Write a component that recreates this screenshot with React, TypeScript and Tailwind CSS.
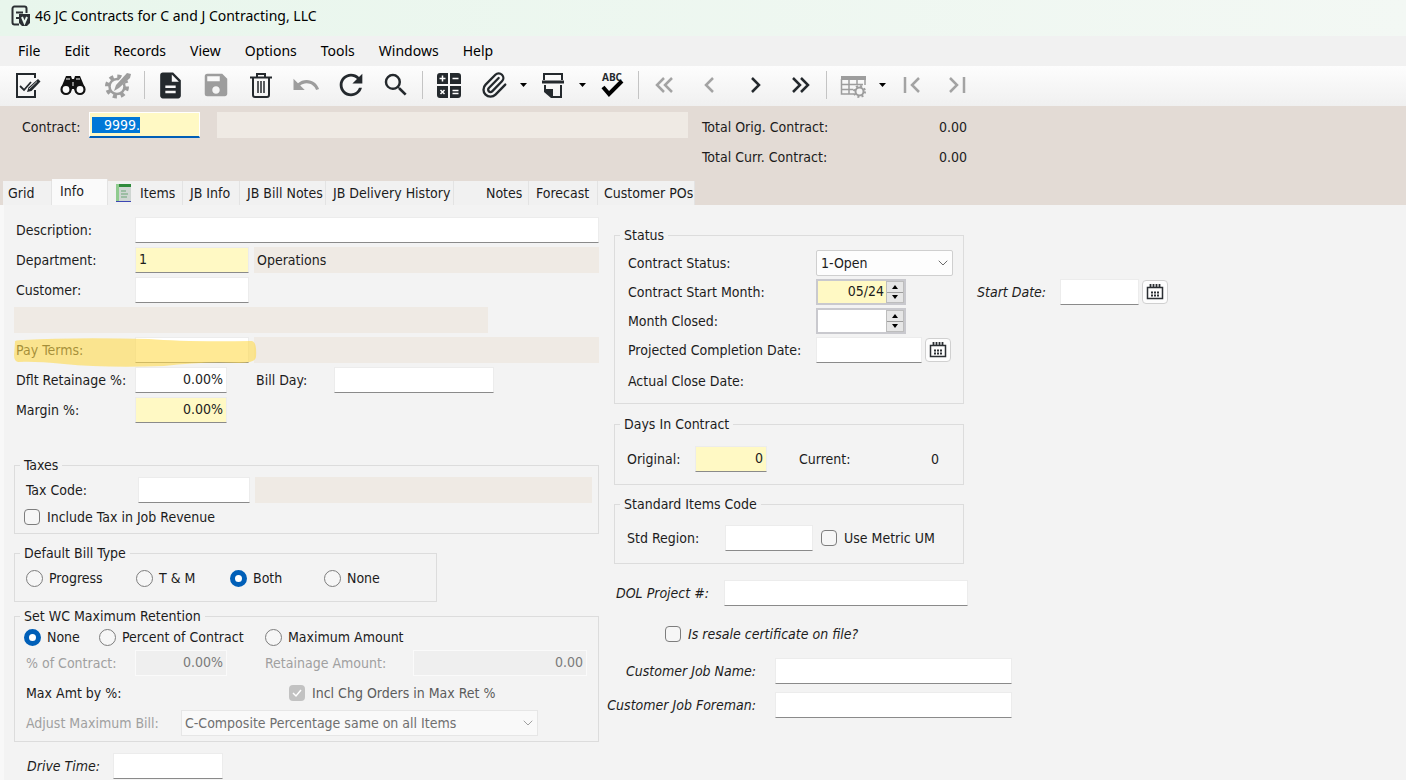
import { useEffect, useRef, useState } from 'react';
import type { ComponentProps, ReactNode } from 'react';
import { MdDescription, MdRefresh, MdSave, MdSearch, MdUndo } from 'react-icons/md';
import { ChevronDown, Paperclip } from 'lucide-react';
import clsx from 'clsx';

const MENUS = ['File', 'Edit', 'Records', 'View', 'Options', 'Tools', 'Windows', 'Help'];

const TABS = [
  { name: 'Grid', className: 'w-[49px] pl-[5px]' },
  { name: 'Info', className: 'w-[56px] pl-2' },
  { name: 'Items', className: 'w-[75px] pl-2' },
  { name: 'JB Info', className: 'w-[57px] pl-[7px]' },
  { name: 'JB Bill Notes', className: 'w-[86px] pl-[7px]' },
  { name: 'JB Delivery History', className: 'w-[128px] pl-[7px]' },
  { name: 'Notes', className: 'w-[75px] pl-8' },
  { name: 'Forecast', className: 'w-[69px] pl-[7px]' },
  { name: 'Customer POs', className: 'w-[97px] pl-[6px]' },
];

/* ---------- Icons ---------- */

function AppIcon() {
  return (
    <svg width="20" height="22" viewBox="0 0 20 22" fill="none">
      <path d="M8 19.5H3.5a2 2 0 0 1-2-2v-14a2 2 0 0 1 2-2h10a2 2 0 0 1 2 2V8" stroke="#2b2f33" strokeWidth="2" />
      <path d="M5 7.5h7M5 13h3" stroke="#2b2f33" strokeWidth="2" />
      <path d="M8 9h11v9l-3 3h-5l-3-3z" fill="#2b2f33" />
      <path d="m11 12 2.5 6 2.5-6" stroke="#e9f7ee" strokeWidth="2" />
    </svg>
  );
}

function EditRecordIcon() {
  return (
    <svg width="28" height="28" viewBox="0 0 28 28" fill="none">
      <path d="M21 19v7H3V3h18v4" stroke="#24292d" strokeWidth="2" />
      <path d="m6 15 4 4 7-8" stroke="#24292d" strokeWidth="1.8" />
      <path d="m13 21 1.5-4.5L24 8l2.5 2.5L17.500 20z" fill="#24292d" />
      <path d="m15 18 8-7.500" stroke="#fafafa" strokeWidth=".7" />
    </svg>
  );
}

function BinocularsIcon() {
  return (
    <svg width="28" height="28" viewBox="0 0 28 28">
      <path d="M7 5h5l1 3h2l1-3h5l5 12-4 5h-5l-2-4h-2l-2 4H6l-4-5z" fill="#111" />
      <path d="M7 8h4M17 8h4M14 11v4" stroke="#fafafa" strokeWidth="1" />
      <circle cx="7" cy="18.5" r="4.5" fill="#fafafa" stroke="#111" strokeWidth="2.2" />
      <circle cx="21" cy="18.5" r="4.5" fill="#fafafa" stroke="#111" strokeWidth="2.2" />
    </svg>
  );
}

function GearPencilIcon() {
  return (
    <svg width="28" height="28" viewBox="0 0 28 28" fill="none" stroke="#9d9d9d">
      <circle cx="13" cy="15.5" r="7.5" strokeWidth="2.5" />
      <circle cx="13" cy="15.5" r="10" strokeWidth="4" strokeDasharray="4 3.854" />
      <path d="M24 4 14 14" stroke="#fafafa" strokeWidth="6" />
      <path d="m10 20 2-6L23 2l4 1-1 4-11 10z" fill="#9d9d9d" stroke="none" />
    </svg>
  );
}

function TrashIcon() {
  return (
    <svg width="28" height="28" viewBox="0 0 28 28" fill="none" stroke="#24292d" strokeWidth="2">
      <path d="M3 6.500h22M10 6V3h8v3M6 7v17a2 2 0 0 0 2 2h12a2 2 0 0 0 2-2V7" />
      <path d="M11 10v12M14 10v12M17 10v12" strokeWidth="1.500" />
    </svg>
  );
}

function CalculatorIcon() {
  return (
    <svg width="28" height="28" viewBox="0 0 28 28">
      <path
        fill="#24292d"
        d="M5 2h8v11H2V5a3 3 0 0 1 3-3zM15 2h8a3 3 0 0 1 3 3v8H15zM2 15h11v12H5a3 3 0 0 1-3-3zM15 15h11v9a3 3 0 0 1-3 3h-8z"
      />
      <path
        stroke="#fff"
        strokeWidth="1.5"
        d="M4.500 7.500h6M7.500 4.500v6M17.500 7.500h6M5.500 19l4 4M9.500 19l-4 4M17.500 19.500h6M17.500 22.500h6"
      />
    </svg>
  );
}

function PageSetupIcon() {
  return (
    <svg width="28" height="28" viewBox="0 0 28 28" fill="none" stroke="#24292d" strokeWidth="2">
      <path d="M5 9V3h18v6" />
      <path d="M3 11h22" strokeWidth="3" />
      <path d="M22 14v12h-9" />
      <path d="M6 14v5" />
      <path d="M5 18h9v9h-2l-7-6z" fill="#24292d" stroke="none" />
    </svg>
  );
}

function SpellingIcon() {
  return (
    <svg width="28" height="28" viewBox="0 0 28 28">
      <text x="14" y="10" textAnchor="middle" fontSize="10" fontWeight="700" fontFamily="Open Sans, sans-serif" fill="#24292d">
        ABC
      </text>
      <path d="m5 16 6 7L24 10" fill="none" stroke="#000" strokeWidth="4" />
    </svg>
  );
}

function NavIcon({ d, off }: { d: string; off?: boolean }) {
  return (
    <svg width="28" height="28" viewBox="0 0 28 28" fill="none" strokeWidth="2.5" stroke={off ? '#a3a3a3' : '#24292d'}>
      <path d={d} />
    </svg>
  );
}

function TableSettingsIcon() {
  return (
    <svg width="28" height="28" viewBox="0 0 28 28" fill="none" stroke="#9d9d9d" strokeWidth="1.5">
      <path d="M2 5h25v4H2z" fill="#9d9d9d" stroke="none" />
      <path d="M2.500 8v15H15M26 8v6M2 13.500h22M2 18.500h12M10 8v15M18 8v6" />
      <circle cx="20.5" cy="20.5" r="4" strokeWidth="2" />
      <circle cx="20.5" cy="20.5" r="5.5" strokeWidth="2" strokeDasharray="2 2.32" />
    </svg>
  );
}

function CalendarIcon() {
  return (
    <svg width="18" height="18" viewBox="0 0 18 18" fill="none" stroke="#2b2f33">
      <path d="M1.500 4.500h15v11h-15z" strokeWidth="1.5" />
      <path d="M4.500 1v4M7.500 1v4M10.500 1v4M13.500 1v4" strokeWidth="1.8" />
      <path d="M5 9.500h8M5 12.500h8" strokeWidth="2" strokeDasharray="2 1" />
    </svg>
  );
}

function ItemsIcon() {
  return (
    <svg width="16" height="20" viewBox="0 0 16 20">
      <path d="M0 1h15v18H0z" fill="#cfd6d2" />
      <path d="M0 1h15v3H0z" fill="#2f8a3c" />
      <path d="M0 1h3v17H0z" fill="#8fcb8f" />
      <path d="M5 8h5M5 11h7M5 14h6" stroke="#6aa577" />
      <path d="M0 18.500h15" stroke="#3c46b4" />
    </svg>
  );
}

/* ---------- Form pieces ---------- */

function TextBox({ className, ...props }: ComponentProps<'input'>) {
  return (
    <input
      type="text"
      className={clsx(
        'h-[26px] shrink-0 border px-[3px] pb-[2px] outline-none',
        props.disabled ? 'bg-[#efefef] text-[#7b7b7b] border-[#fafafa]' : 'border-[#ececec] border-b-[#8a8a8a]',
        className
      )}
      {...props}
    />
  );
}

function Group({ title, className, children }: { title: string; className?: string; children: ReactNode }) {
  return (
    <fieldset className={clsx('border border-[#dcdcdc]', className)}>
      <legend className="ml-[5px] px-1 h-5 leading-5">{title}</legend>
      {children}
    </fieldset>
  );
}

function Radio({ label, name, defaultChecked, className }: { label: string; name: string; defaultChecked?: boolean; className?: string }) {
  return (
    <label className={clsx('flex items-center gap-[6px] shrink-0 whitespace-nowrap', className)}>
      <input
        type="radio"
        name={name}
        defaultChecked={defaultChecked}
        className="appearance-none w-[17px] h-[17px] rounded-full border border-[#7d7d7d] bg-[#f6f6f6] checked:bg-white checked:border-[5px] checked:border-[#005fb8]"
      />
      {label}
    </label>
  );
}

function Check({ label, className }: { label: string; className?: string }) {
  return (
    <label className={clsx('flex items-center gap-[7px] shrink-0 whitespace-nowrap', className)}>
      <input
        type="checkbox"
        className="appearance-none w-4 h-4 rounded-[4px] border border-[#7d7d7d] bg-[#f6f6f6] checked:bg-[#005fb8]"
      />
      {label}
    </label>
  );
}

function Spinner({ id, value, className }: { id: string; value: string; className: string }) {
  return (
    <div className="flex w-[90px] h-[26px] border-2 border-[#c9c9ce] bg-white">
      <input id={id} type="text" defaultValue={value} className={clsx('w-[68px] pr-[2px] pb-[2px] text-right outline-none', className)} />
      <div className="flex flex-col flex-1 bg-[#e6e6e6] border border-[#bdbdbd]">
        <button aria-label="Later month" className="flex-1 flex items-center justify-center border-b border-[#9d9d9d]">
          <svg width="6" height="4" viewBox="0 0 6 4"><path d="M3 0l3 4H0z" /></svg>
        </button>
        <button aria-label="Earlier month" className="flex-1 flex items-center justify-center">
          <svg width="6" height="4" viewBox="0 0 6 4"><path d="M3 4l3-4H0z" /></svg>
        </button>
      </div>
    </div>
  );
}

function DateButton({ label }: { label: string }) {
  return (
    <button aria-label={label} className="ml-[3px] w-[26px] h-6 shrink-0 flex items-center justify-center rounded-[4px] border border-[#d0d0d0] bg-[#fdfdfd]">
      <CalendarIcon />
    </button>
  );
}

function Filler({ className }: { className?: string }) {
  return <div className={clsx('h-[26px] bg-[#efeae4]', className)} />;
}

/* ---------- Toolbar ---------- */

function ToolButton({ label, disabled, children }: { label: string; disabled?: boolean; children: ReactNode }) {
  return (
    <button
      aria-label={label}
      disabled={disabled}
      className={clsx('w-[45px] h-9 shrink-0 flex items-center justify-center', disabled ? 'text-[#9d9d9d]' : 'text-[#24292d]')}
    >
      {children}
    </button>
  );
}

function ToolArrow({ label }: { label: string }) {
  return (
    <button aria-label={label} className="w-[14px] h-9 shrink-0 flex items-center justify-center">
      <svg width="7" height="4" viewBox="0 0 7 4"><path d="M0 0h7L3.5 4z" /></svg>
    </button>
  );
}

function ToolSeparator() {
  return (
    <div className="w-2 shrink-0 flex justify-center">
      <div className="w-px h-7 bg-[#c4c4c4]" />
    </div>
  );
}

function Toolbar() {
  return (
    <div className="flex items-center h-10 pl-[5px] pb-[2px] bg-linear-to-b from-[#fdfdfd] to-[#f0f0f0]">
      <ToolButton label="Edit record"><EditRecordIcon /></ToolButton>
      <ToolButton label="Find"><BinocularsIcon /></ToolButton>
      <ToolButton label="Customize" disabled><GearPencilIcon /></ToolButton>
      <ToolSeparator />
      <ToolButton label="New"><MdDescription size={31} /></ToolButton>
      <ToolButton label="Save" disabled><MdSave size={30} /></ToolButton>
      <ToolButton label="Delete"><TrashIcon /></ToolButton>
      <ToolButton label="Undo" disabled><MdUndo size={30} /></ToolButton>
      <ToolButton label="Refresh"><MdRefresh size={34} /></ToolButton>
      <ToolButton label="Search"><MdSearch size={30} /></ToolButton>
      <ToolSeparator />
      <ToolButton label="Calculator"><CalculatorIcon /></ToolButton>
      <ToolButton label="Attachments"><Paperclip size={28} strokeWidth={2} /></ToolButton>
      <ToolArrow label="Attachment options" />
      <ToolButton label="Page setup"><PageSetupIcon /></ToolButton>
      <ToolArrow label="Page setup options" />
      <ToolButton label="Spelling"><SpellingIcon /></ToolButton>
      <ToolSeparator />
      <ToolButton label="First" disabled><NavIcon off d="m13 7-7 7 7 7M21 7l-7 7 7 7" /></ToolButton>
      <ToolButton label="Previous" disabled><NavIcon off d="m17 7-7 7 7 7" /></ToolButton>
      <ToolButton label="Next"><NavIcon d="m11 7 7 7-7 7" /></ToolButton>
      <ToolButton label="Last"><NavIcon d="m7 7 7 7-7 7M15 7l7 7-7 7" /></ToolButton>
      <ToolSeparator />
      <ToolButton label="Grid settings" disabled><TableSettingsIcon /></ToolButton>
      <ToolArrow label="Grid options" />
      <ToolButton label="First tab" disabled><NavIcon off d="M7 6v16M21 7l-7 7 7 7" /></ToolButton>
      <ToolButton label="Last tab" disabled><NavIcon off d="m7 7 7 7-7 7M21 6v16" /></ToolButton>
    </div>
  );
}

/* ---------- Page sections ---------- */

function ContractHeader() {
  const contractRef = useRef<HTMLInputElement>(null);

  useEffect(() => {
    contractRef.current?.focus();
    contractRef.current?.select();
  }, []);

  return (
    <div className="flex items-start pl-[22px] pt-[6px] h-[73px]">
      <label htmlFor="contract" className="w-[67px] leading-[30px]">Contract:</label>
      <input
        id="contract"
        ref={contractRef}
        type="text"
        defaultValue="   9999."
        className="w-[111px] h-[26px] px-[2px] leading-[18px] bg-[#fff9c4] border border-white border-b-2 border-b-[#005fb8] outline-none selection:bg-[#0078d7] selection:text-white"
      />
      <Filler className="ml-[17px] w-[471px]" />
      <dl className="ml-[14px] grid grid-cols-[165px_100px] leading-[30px]">
        <dt>Total Orig. Contract:</dt>
        <dd className="text-right">0.00</dd>
        <dt>Total Curr. Contract:</dt>
        <dd className="text-right">0.00</dd>
      </dl>
    </div>
  );
}

function TabStrip() {
  const [active, setActive] = useState('Info');

  return (
    <div role="tablist" className="flex items-end pl-[3px]">
      {TABS.map((tab) => (
        <button
          key={tab.name}
          role="tab"
          aria-selected={active === tab.name}
          onClick={() => setActive(tab.name)}
          className={clsx(
            'shrink-0 flex items-center gap-2 border-r border-[#e3e3e3] text-left whitespace-nowrap',
            active === tab.name ? 'h-[26px] pb-[2px] bg-[#fafafa]' : 'h-6 bg-[#f1f1f1]',
            tab.className
          )}
        >
          {tab.name === 'Items' && <ItemsIcon />}
          {tab.name}
        </button>
      ))}
    </div>
  );
}

function GeneralFields() {
  const row = 'flex items-center h-[26px]';
  const label = 'w-[119px] shrink-0 whitespace-nowrap';

  return (
    <div className="flex flex-col gap-1">
      <div className={clsx(row, 'pl-[2px]')}>
        <label htmlFor="description" className={label}>Description:</label>
        <TextBox id="description" className="w-[464px] bg-white" />
      </div>
      <div className={clsx(row, 'pl-[2px]')}>
        <label htmlFor="department" className={label}>Department:</label>
        <TextBox id="department" defaultValue="1" className="w-[114px] bg-[#fff9c4]" />
        <output htmlFor="department" className="ml-[5px] pl-[3px] flex-1 h-full leading-[26px] bg-[#efeae4]">Operations</output>
      </div>
      <div className={clsx(row, 'pl-[2px]')}>
        <label htmlFor="customer" className={label}>Customer:</label>
        <TextBox id="customer" className="w-[114px] bg-white" />
      </div>
      <Filler className="w-[474px]" />
      <div className={clsx(row, 'relative pl-[2px]')}>
        <label htmlFor="terms" className={label}>Pay Terms:</label>
        <TextBox id="terms" className="w-[114px] bg-white" />
        <Filler className="ml-[5px] flex-1" />
        {/* marker stroke over the label and box */}
        <svg className="absolute left-0 top-0 pointer-events-none" width="244" height="32" viewBox="0 0 244 32">
          <path
            d="M1 5Q0 3 8 3Q60 0 135 2Q170 5 238 4Q243 5 242 20Q241 26 225 26Q190 24 150 29Q90 31 50 27Q20 24 4 25Q0 24 0 18Z"
            fill="#ffdb4d"
            fillOpacity="0.6"
          />
        </svg>
      </div>
      <div className={clsx(row, 'pl-[2px]')}>
        <label htmlFor="retainage" className={label}>Dflt Retainage %:</label>
        <TextBox id="retainage" defaultValue="0.00%" className="w-[92px] bg-white text-right" />
        <label htmlFor="billday" className="ml-[29px] w-[78px]">Bill Day:</label>
        <TextBox id="billday" className="w-[160px] bg-white" />
      </div>
      <div className={clsx(row, 'pl-[2px]')}>
        <label htmlFor="margin" className={label}>Margin %:</label>
        <TextBox id="margin" defaultValue="0.00%" className="w-[92px] bg-[#fff9c4] text-right" />
      </div>
    </div>
  );
}

function RetentionGroup() {
  return (
    <Group title="Set WC Maximum Retention" className="mt-1 pb-[3px]">
      <div className="flex items-center h-[22px] pl-[9px]">
        <Radio name="retention" label="None" defaultChecked className="w-[75px]" />
        <Radio name="retention" label="Percent of Contract" className="w-[166px]" />
        <Radio name="retention" label="Maximum Amount" />
      </div>
      <div className="flex items-center h-[30px] pl-[11px] text-[#a0a0a0]">
        <label htmlFor="pct" className="w-[109px]">% of Contract:</label>
        <TextBox id="pct" disabled defaultValue="0.00%" className="w-[92px] text-right" />
        <label htmlFor="retamt" className="ml-[38px] w-[148px]">Retainage Amount:</label>
        <TextBox id="retamt" disabled defaultValue="0.00" className="w-[174px] text-right" />
      </div>
      <div className="flex items-center h-[30px] pl-[11px]">
        <span className="w-[263px]">Max Amt by %:</span>
        <label className="flex items-center gap-[7px] text-[#5c5c5c]">
          <span className="grid w-4 h-4">
            <input type="checkbox" disabled defaultChecked className="appearance-none col-start-1 row-start-1 w-4 h-4 rounded-[4px] bg-[#c2c2c2]" />
            <svg viewBox="0 0 16 16" fill="none" className="col-start-1 row-start-1 w-4 h-4 pointer-events-none">
              <path d="m4 8 3 3 5-6" stroke="#fff" strokeWidth="1.5" />
            </svg>
          </span>
          Incl Chg Orders in Max Ret %
        </label>
      </div>
      <div className="flex items-center h-[30px] pl-[11px] text-[#a0a0a0]">
        <label htmlFor="adjust" className="w-[155px]">Adjust Maximum Bill:</label>
        <div className="grid items-center w-[357px]">
          <select id="adjust" disabled className="appearance-none col-start-1 row-start-1 h-[26px] px-[3px] bg-[#f9f9f9] border border-[#e6e6e6] text-[#6f6f6f] opacity-100">
            <option>C-Composite Percentage same on all Items</option>
          </select>
          <ChevronDown size={16} strokeWidth={1.5} className="col-start-1 row-start-1 justify-self-end mr-[2px] pointer-events-none" />
        </div>
      </div>
    </Group>
  );
}

function StatusGroup() {
  const row = 'flex items-center h-[26px]';
  const label = 'w-[188px] shrink-0';

  return (
    <Group title="Status" className="w-[350px] shrink-0 pb-[7px]">
      <div className="flex flex-col gap-[3px] pl-[13px] pt-[5px]">
        <div className={row}>
          <label htmlFor="status" className={label}>Contract Status:</label>
          <div className="grid items-center w-[137px]">
            <select id="status" className="appearance-none col-start-1 row-start-1 h-[26px] px-1 bg-[#fdfdfd] border border-[#cfcfcf] rounded-[2px]">
              <option>1-Open</option>
            </select>
            <ChevronDown size={16} strokeWidth={1.5} className="col-start-1 row-start-1 justify-self-end mr-[2px] text-[#6b6b6b] pointer-events-none" />
          </div>
        </div>
        <div className={row}>
          <label htmlFor="startmonth" className={label}>Contract Start Month:</label>
          <Spinner id="startmonth" value="05/24" className="bg-[#fff9c4]" />
        </div>
        <div className={row}>
          <label htmlFor="monthclosed" className={label}>Month Closed:</label>
          <Spinner id="monthclosed" value="" className="bg-white" />
        </div>
        <div className={row}>
          <label htmlFor="projected" className={label}>Projected Completion Date:</label>
          <TextBox id="projected" className="w-[106px] bg-white" />
          <DateButton label="Pick projected completion date" />
        </div>
        <div className="flex items-center h-[30px]">Actual Close Date:</div>
      </div>
    </Group>
  );
}

export default function App() {
  return (
    <div className="min-h-screen flex flex-col bg-[#f3f3f3] text-[#1c1c1c] text-[14px] leading-[18px] [font-family:'DejaVu_Sans_Condensed','Noto_Sans',sans-serif]">
      <header>
        <div className="flex items-center h-9 pl-[11px] gap-1 pb-1 bg-linear-to-r from-[#e8f6ec] to-[#f3f8f4]">
          <AppIcon />
          <h1 className="text-[14px] text-black [font-family:'Noto_Sans',sans-serif]">46 JC Contracts for C and J Contracting, LLC</h1>
        </div>
        <nav className="flex items-center gap-6 h-[30px] pl-[18px] bg-[#f1f1f1] text-black [font-family:'Noto_Sans',sans-serif]">
          {MENUS.map((menu) => (
            <button key={menu}>{menu}</button>
          ))}
        </nav>
        <Toolbar />
        <div className="bg-[#e3dbd5]">
          <ContractHeader />
          <TabStrip />
        </div>
      </header>

      <main className="flex-1 flex items-start gap-[15px] pl-[10px] border-l-4 border-[#f8f8f8]">
        <section className="w-[585px] shrink-0 pt-3">
          <GeneralFields />

          <Group title="Taxes" className="mt-8 pb-1">
            <div className="flex items-center h-[29px] pl-[11px] pr-[6px]">
              <label htmlFor="taxcode" className="w-[112px]">Tax Code:</label>
              <TextBox id="taxcode" className="w-[112px] bg-white" />
              <Filler className="ml-[5px] flex-1" />
            </div>
            <Check label="Include Tax in Job Revenue" className="pl-[9px] h-6 mt-px" />
          </Group>

          <Group title="Default Bill Type" className="mt-[9px] w-[423px] pb-2">
            <div className="flex items-center h-[30px] pl-[11px]">
              <Radio name="billtype" label="Progress" className="w-[110px]" />
              <Radio name="billtype" label="T & M" className="w-[94px]" />
              <Radio name="billtype" label="Both" defaultChecked className="w-[94px]" />
              <Radio name="billtype" label="None" />
            </div>
          </Group>

          <RetentionGroup />

          <div className="flex items-center mt-[11px] pl-[13px]">
            <label htmlFor="drivetime" className="w-[86px] italic">Drive Time:</label>
            <TextBox id="drivetime" className="w-[110px] bg-white" />
          </div>
        </section>

        <section className="flex-1 min-w-0 pt-5">
          <div className="flex items-start">
            <StatusGroup />
            <div className="flex items-center pt-[54px] pl-[13px]">
              <label htmlFor="startdate" className="w-[83px] italic">Start Date:</label>
              <TextBox id="startdate" className="w-[79px] bg-white" />
              <DateButton label="Pick start date" />
            </div>
          </div>

          <Group title="Days In Contract" className="mt-[10px] w-[350px] pb-3">
            <div className="flex items-center pl-3 pt-3">
              <label htmlFor="original" className="w-[68px]">Original:</label>
              <TextBox id="original" defaultValue="0" className="w-[72px] bg-[#fff9c4] text-right" />
              <span className="ml-8 w-[100px]">Current:</span>
              <span className="w-10 text-right">0</span>
            </div>
          </Group>

          <Group title="Standard Items Code" className="mt-[9px] w-[350px] pb-3">
            <div className="flex items-center pl-3 pt-[11px]">
              <label htmlFor="region" className="w-[98px]">Std Region:</label>
              <TextBox id="region" className="w-[88px] bg-white" />
              <Check label="Use Metric UM" className="ml-2" />
            </div>
          </Group>

          <div className="flex items-center mt-4 pl-[2px]">
            <label htmlFor="dol" className="w-[108px] italic">DOL Project #:</label>
            <TextBox id="dol" className="w-[244px] bg-white" />
          </div>
          <Check label="Is resale certificate on file?" className="mt-[19px] pl-[51px] italic" />
          <div className="mt-[15px] flex flex-col gap-2">
            <div className="flex items-center">
              <label htmlFor="jobname" className="w-[142px] mr-[19px] flex justify-end italic whitespace-nowrap">Customer Job Name:</label>
              <TextBox id="jobname" className="w-[237px] bg-white" />
            </div>
            <div className="flex items-center">
              <label htmlFor="foreman" className="w-[142px] mr-[19px] flex justify-end italic whitespace-nowrap">Customer Job Foreman:</label>
              <TextBox id="foreman" className="w-[237px] bg-white" />
            </div>
          </div>
        </section>
      </main>
    </div>
  );
}
